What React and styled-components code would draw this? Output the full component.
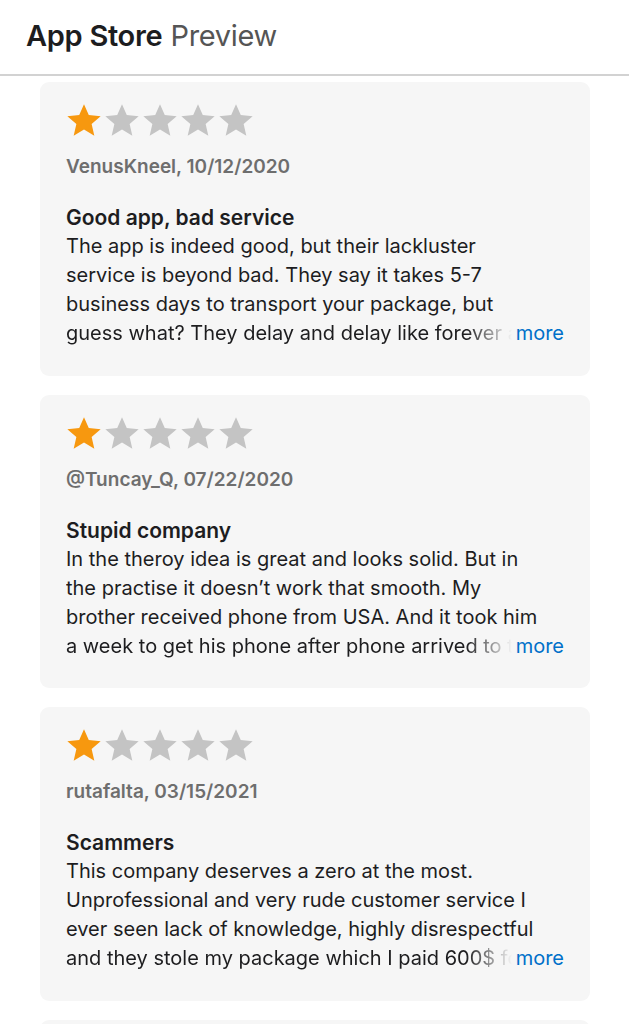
import React from 'react'
import styled, { createGlobalStyle } from 'styled-components'

const GlobalStyle = createGlobalStyle`
  * { box-sizing: border-box; }
  body {
    margin: 0;
    background: #fff;
    font-family: Inter, "Noto Sans", "Liberation Sans", sans-serif;
    color: #1d1d1f;
  }
`

// lines are kept as the store wraps them; the last one fades out before "more"
const reviews = [
  {
    id: 1,
    rating: 1,
    author: 'VenusKneel',
    date: '10/12/2020',
    title: 'Good app, bad service',
    lines: [
      'The app is indeed good, but their lackluster',
      'service is beyond bad. They say it takes 5-7',
      'business days to transport your package, but',
      'guess what? They delay and delay like forever and nobody answers.',
    ],
  },
  {
    id: 2,
    rating: 1,
    author: '@Tuncay_Q',
    date: '07/22/2020',
    title: 'Stupid company',
    lines: [
      'In the theroy idea is great and looks solid. But in',
      'the practise it doesn\u2019t work that smooth. My',
      'brother received phone from USA. And it took him',
      'a week to get his phone after phone arrived to the warehouse.',
    ],
  },
  {
    id: 3,
    rating: 1,
    author: 'rutafalta',
    date: '03/15/2021',
    title: 'Scammers',
    lines: [
      'This company deserves a zero at the most.',
      'Unprofessional and very rude customer service I',
      'ever seen lack of knowledge, highly disrespectful',
      'and they stole my package which I paid 600$ for shipping.',
    ],
  },
  {
    id: 4,
    rating: 1,
    author: 'anon',
    date: '01/02/2021',
    title: 'Never again',
    lines: ['Nothing arrived.'],
  },
]

const Star = ({ filled }) => (
  <StarIcon viewBox="0 0 24 24" $filled={filled}>
    <path d="M12 1.4l3.1 7.1 7.7.7-5.85 5.1 1.75 7.55L12 17.9l-6.7 3.95 1.75-7.55L1.2 9.2l7.7-.7z" />
  </StarIcon>
)

const Review = ({ review }) => (
  <Card>
    <Stars>
      {[1, 2, 3, 4, 5].map((n) => (
        <Star key={n} filled={n <= review.rating} />
      ))}
    </Stars>
    <Author>
      {review.author}, {review.date}
    </Author>
    <Title>{review.title}</Title>
    <Body>
      {review.lines.map((l, i) => (
        <Line key={i} $last={i === review.lines.length - 1}>
          {l}
        </Line>
      ))}
      <More href="#">more</More>
    </Body>
  </Card>
)

const App = () => {
  return (
    <>
      <GlobalStyle />
      <Header>
        <Brand>App Store</Brand>
        <Sub>Preview</Sub>
      </Header>
      <List>
        {reviews.map((r) => (
          <Review key={r.id} review={r} />
        ))}
      </List>
    </>
  )
}

const Header = styled.header`
  height: 76px;
  display: flex;
  align-items: center;
  gap: 8px;
  padding: 0 26px 3px;
  border-bottom: 2px solid #d2d2d2;
  background: #fff;
`

const Brand = styled.span`
  font-size: 29px;
  font-weight: 600;
  letter-spacing: -0.3px;
  color: #1d1d1f;
`

const Sub = styled.span`
  font-size: 29px;
  font-weight: 400;
  letter-spacing: -0.3px;
  color: #555;
`

const List = styled.main`
  display: flex;
  flex-direction: column;
  gap: 19px;
  padding: 6px 39px 0 40px;
  height: 948px;
  overflow: hidden;
`

const Card = styled.article`
  flex-shrink: 0;
  height: 293.5px;
  background: #f6f6f6;
  border-radius: 9px;
  padding: 20px 26px 0;
  display: flex;
  flex-direction: column;
`

const Stars = styled.div`
  display: flex;
  height: 36px;
  margin-left: -1px;
`

const StarIcon = styled.svg`
  width: 38px;
  height: 37px;
  fill: ${(p) => (p.$filled ? '#f7980f' : '#c4c4c4')};
`

const Author = styled.div`
  margin-top: 16px;
  font-size: 19px;
  line-height: 26px;
  font-weight: 600;
  color: #6e6e6e;
`

const Title = styled.h3`
  margin: 23px 0 0;
  font-size: 21px;
  line-height: 29px;
  font-weight: 600;
  color: #1d1d1f;
`

const Body = styled.div`
  position: relative;
  font-size: 20px;
  line-height: 29px;
  color: #1d1d1f;
`

const Line = styled.span`
  display: block;
  white-space: nowrap;
  overflow: hidden;
  margin-right: ${(p) => (p.$last ? '52px' : '0')};
  mask-image: ${(p) =>
    p.$last ? 'linear-gradient(to right, #000 calc(100% - 46px), transparent)' : 'none'};
`

const More = styled.a`
  position: absolute;
  right: 0;
  bottom: 0;
  color: #0070c9;
  text-decoration: none;
`

export default App
